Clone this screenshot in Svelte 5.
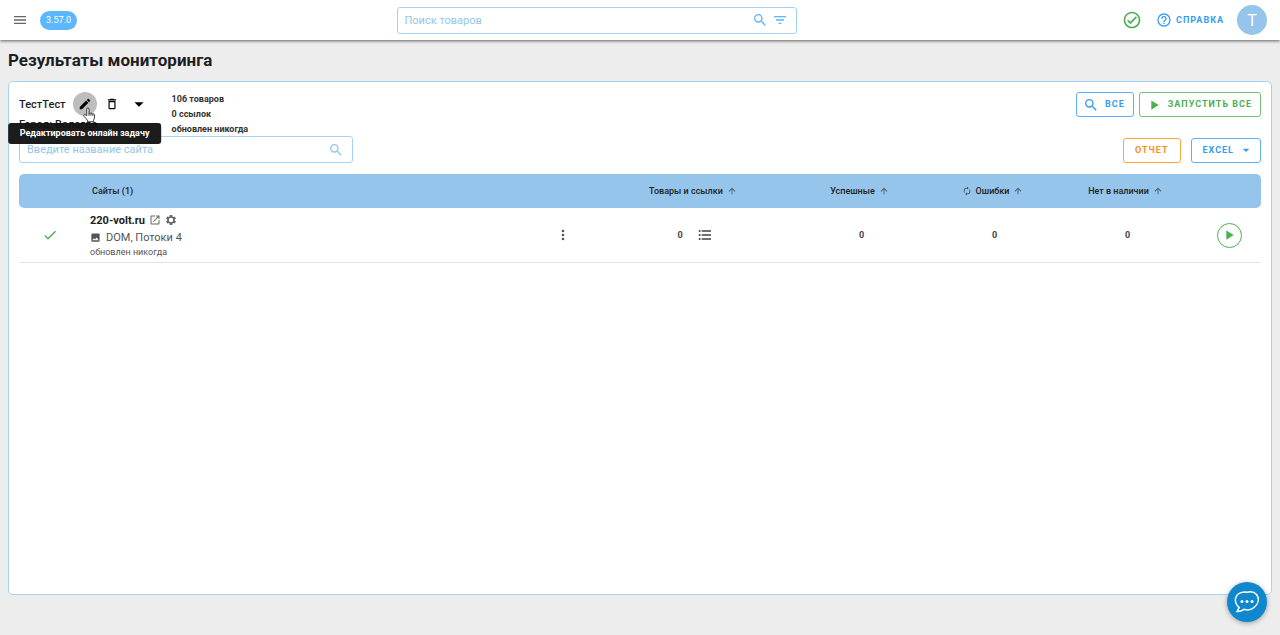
<script>
  const icons = {
    menu: 'M3,6H21V8H3V6M3,11H21V13H3V11M3,16H21V18H3V16Z',
    magnify: 'M9.5,3A6.5,6.5 0 0,1 16,9.5C16,11.11 15.41,12.59 14.44,13.73L14.71,14H15.5L20.5,19L19,20.5L14,15.5V14.71L13.73,14.44C12.59,15.41 11.11,16 9.5,16A6.5,6.5 0 0,1 3,9.5A6.5,6.5 0 0,1 9.5,3M9.5,5C7,5 5,7 5,9.5C5,12 7,14 9.5,14C12,14 14,12 14,9.5C14,7 12,5 9.5,5Z',
    filter: 'M6,13H18V11H6M3,6V8H21V6M10,18H14V16H10V18Z',
    checkCircle: 'M12 2C6.5 2 2 6.5 2 12S6.5 22 12 22 22 17.5 22 12 17.5 2 12 2M12 20C7.59 20 4 16.41 4 12S7.59 4 12 4 20 7.59 20 12 16.41 20 12 20M16.59 7.58L10 14.17L7.41 11.59L6 13L10 17L18 9L16.59 7.58Z',
    help: 'M11,18H13V16H11V18M12,2A10,10 0 0,0 2,12A10,10 0 0,0 12,22A10,10 0 0,0 22,12A10,10 0 0,0 12,2M12,20C7.59,20 4,16.41 4,12C4,7.59 7.59,4 12,4C16.41,4 20,7.59 20,12C20,16.41 16.41,20 12,20M12,6A4,4 0 0,0 8,10H10A2,2 0 0,1 12,8A2,2 0 0,1 14,10C14,12 11,11.75 11,15H13C13,12.75 16,12.5 16,10A4,4 0 0,0 12,6Z',
    pencil: 'M20.71,7.04C21.1,6.65 21.1,6 20.71,5.63L18.37,3.29C18,2.9 17.35,2.9 16.96,3.29L15.12,5.12L18.87,8.87M3,17.25V21H6.75L17.81,9.93L14.06,6.18L3,17.25Z',
    trash: 'M6,19A2,2 0 0,0 8,21H16A2,2 0 0,0 18,19V7H6V19M8,9H16V19H8V9M15.5,4L14.5,3H9.5L8.5,4H5V6H19V4H15.5Z',
    down: 'M7,10L12,15L17,10H7Z',
    play: 'M8,5.14V19.14L19,12.14L8,5.14Z',
    check: 'M21,7L9,19L3.5,13.5L4.91,12.09L9,16.17L19.59,5.59L21,7Z',
    open: 'M14,3V5H17.59L7.76,14.83L9.17,16.24L19,6.41V10H21V3M19,19H5V5H12V3H5C3.89,3 3,3.9 3,5V19A2,2 0 0,0 5,21H19A2,2 0 0,0 21,19V12H19V19Z',
    cog: 'M19.43,12.98C19.47,12.66 19.5,12.34 19.5,12C19.5,11.66 19.47,11.34 19.43,11.02L21.54,9.37C21.73,9.22 21.78,8.95 21.66,8.73L19.66,5.27C19.54,5.05 19.27,4.97 19.05,5.05L16.56,6.05C16.04,5.65 15.48,5.32 14.87,5.07L14.49,2.42C14.46,2.18 14.25,2 14,2H10C9.75,2 9.54,2.18 9.51,2.42L9.13,5.07C8.52,5.32 7.96,5.66 7.44,6.05L4.95,5.05C4.72,4.96 4.46,5.05 4.34,5.27L2.34,8.73C2.21,8.95 2.27,9.22 2.46,9.37L4.57,11.02C4.53,11.34 4.5,11.67 4.5,12C4.5,12.33 4.53,12.66 4.57,12.98L2.46,14.63C2.27,14.78 2.22,15.05 2.34,15.27L4.34,18.73C4.46,18.95 4.73,19.03 4.95,18.95L7.44,17.95C7.96,18.35 8.52,18.68 9.13,18.93L9.51,21.58C9.54,21.82 9.75,22 10,22H14C14.25,22 14.46,21.82 14.49,21.58L14.87,18.93C15.48,18.68 16.04,18.34 16.56,17.95L19.05,18.95C19.28,19.04 19.54,18.95 19.66,18.73L21.66,15.27C21.78,15.05 21.73,14.78 21.54,14.63L19.43,12.98M12,16.5A4.5,4.5 0 0,1 7.5,12A4.5,4.5 0 0,1 12,7.5A4.5,4.5 0 0,1 16.5,12A4.5,4.5 0 0,1 12,16.5Z',
    image: 'M8.5,13.5L11,16.5L14.5,12L19,18H5M21,19V5C21,3.89 20.1,3 19,3H5A2,2 0 0,0 3,5V19A2,2 0 0,0 5,21H19A2,2 0 0,0 21,19Z',
    dots: 'M12,16A2,2 0 0,1 14,18A2,2 0 0,1 12,20A2,2 0 0,1 10,18A2,2 0 0,1 12,16M12,10A2,2 0 0,1 14,12A2,2 0 0,1 12,14A2,2 0 0,1 10,12A2,2 0 0,1 12,10M12,4A2,2 0 0,1 14,6A2,2 0 0,1 12,8A2,2 0 0,1 10,6A2,2 0 0,1 12,4Z',
    list: 'M7,5H21V7H7V5M7,13V11H21V13H7M4,4.5A1.5,1.5 0 0,1 5.5,6A1.5,1.5 0 0,1 4,7.5A1.5,1.5 0 0,1 2.5,6A1.5,1.5 0 0,1 4,4.5M4,10.5A1.5,1.5 0 0,1 5.5,12A1.5,1.5 0 0,1 4,13.5A1.5,1.5 0 0,1 2.5,12A1.5,1.5 0 0,1 4,10.5M7,19V17H21V19H7M4,16.5A1.5,1.5 0 0,1 5.5,18A1.5,1.5 0 0,1 4,19.5A1.5,1.5 0 0,1 2.5,18A1.5,1.5 0 0,1 4,16.5Z',
    up: 'M13,20H11V8L5.5,13.5L4.08,12.08L12,4.16L19.92,12.08L18.5,13.5L13,8V20Z',
    sync: 'M12,6V9L16,5L12,1V4A8,8 0 0,0 4,12C4,13.57 4.46,15.03 5.24,16.26L6.7,14.8C6.25,13.97 6,13 6,12A6,6 0 0,1 12,6M18.76,7.74L17.3,9.2C17.74,10.04 18,11 18,12A6,6 0 0,1 12,18V15L8,19L12,23V20A8,8 0 0,0 20,12C20,10.43 19.54,8.97 18.76,7.74Z'
  };

  const columns = [
    { title: 'Товары и ссылки', key: 'links', list: true },
    { title: 'Успешные', key: 'success' },
    { title: 'Ошибки', key: 'errors', sync: true },
    { title: 'Нет в наличии', key: 'missing' }
  ];

  const sites = [
    {
      name: '220-volt.ru',
      mode: 'DOM, Потоки 4',
      updated: 'обновлен никогда',
      links: 0,
      success: 0,
      errors: 0,
      missing: 0
    }
  ];

  let productQuery = $state('');
  let siteQuery = $state('');
</script>

{#snippet icon(name, size = 16)}
  <svg class="icon" viewBox="0 0 24 24" width={size} height={size} aria-hidden="true">
    <path d={icons[name]} />
  </svg>
{/snippet}

<div class="app">
  <header class="topbar">
    <div class="group brand">
      <button class="plain" aria-label="Меню">{@render icon('menu')}</button>
      <span class="chip">3.57.0</span>
    </div>

    <div class="field product-search">
      <input type="text" placeholder="Поиск товаров" aria-label="Поиск товаров" bind:value={productQuery} />
      <button class="plain" aria-label="Найти">{@render icon('magnify')}</button>
      <button class="plain" aria-label="Фильтр">{@render icon('filter')}</button>
    </div>

    <div class="group account">
      <span class="status">{@render icon('checkCircle', 20)}</span>
      <a class="help" href="#help">{@render icon('help')}Справка</a>
      <button class="avatar">Т</button>
    </div>
  </header>

  <main>
    <h1>Результаты мониторинга</h1>

    <section class="card">
      <div class="task">
        <div class="task-main">
          <div class="task-title">
            <span class="task-name">ТестТест</span>
            <div class="edit">
              <button class="round active" aria-label="Редактировать" aria-describedby="edit-tip">{@render icon('pencil', 14)}</button>
              <div class="tooltip" id="edit-tip" role="tooltip">Редактировать онлайн задачу</div>
              <svg class="pointer" viewBox="0 0 16 20" width="12" height="16" aria-hidden="true">
                <path d="M5 11V2.2a1.5 1.5 0 0 1 3 0V8a1.4 1.4 0 0 1 2.6.3 1.4 1.4 0 0 1 2.4.5 1.3 1.3 0 0 1 2.2 1V14c0 1-1 2-1 3v2H6v-2L1.3 11.7a1.4 1.4 0 0 1 2-1.9Z" />
                <path d="M8 8v3M10.6 8.5V11M13 9v2" />
              </svg>
            </div>
            <button class="round" aria-label="Удалить">{@render icon('trash', 14)}</button>
            <button class="round" aria-label="Ещё">{@render icon('down', 22)}</button>
          </div>
          <div class="city">Город: Вологда</div>
        </div>

        <div class="task-info">
          <div>106 товаров</div>
          <div>0 ссылок</div>
          <div>обновлен никогда</div>
        </div>

        <div class="actions">
          <button class="btn blue">{@render icon('magnify')}Все</button>
          <button class="btn green">{@render icon('play')}Запустить все</button>
        </div>
      </div>

      <div class="filters">
        <div class="field site-search">
          <input type="text" placeholder="Введите название сайта" aria-label="Введите название сайта" bind:value={siteQuery} />
          <button class="plain" aria-label="Найти сайт">{@render icon('magnify')}</button>
        </div>
        <div class="actions wide">
          <button class="btn orange">Отчет</button>
          <button class="btn blue excel">Excel{@render icon('down')}</button>
        </div>
      </div>

      <table>
        <thead>
          <tr>
            <th class="col-status"></th>
            <th class="col-site">Сайты ({sites.length})</th>
            <th class="col-menu"></th>
            {#each columns as column}
              <th class:col-links={column.list} class:col-count={!column.list}>
                <span class="sort">
                  {#if column.sync}{@render icon('sync', 10)}{/if}
                  {column.title}
                  {@render icon('up', 10)}
                </span>
              </th>
            {/each}
            <th class="col-run"></th>
          </tr>
        </thead>
        <tbody>
          {#each sites as site}
            <tr>
              <td class="done">{@render icon('check')}</td>
              <td class="site">
                <div class="site-name">
                  {site.name}
                  <a href="#open" aria-label="Открыть сайт">{@render icon('open', 12)}</a>
                  <button class="plain" aria-label="Настройки">{@render icon('cog', 12)}</button>
                </div>
                <div class="site-mode">{@render icon('image', 11)}{site.mode}</div>
                <div class="site-updated">{site.updated}</div>
              </td>
              <td><button class="plain menu" aria-label="Действия">{@render icon('dots')}</button></td>
              {#each columns as column}
                <td>
                  <span class="count">
                    {site[column.key]}
                    {#if column.list}
                      <button class="plain" aria-label="Список">{@render icon('list')}</button>
                    {/if}
                  </span>
                </td>
              {/each}
              <td class="launch"><button class="run" aria-label="Запустить">{@render icon('play')}</button></td>
            </tr>
          {/each}
        </tbody>
      </table>
    </section>
  </main>

  <button class="chat" aria-label="Чат">
    <svg viewBox="0 0 26 24" width="26" height="24" aria-hidden="true">
      <path d="M3 21.5 5.2 17.6C-1 12 1 4.500 7 2.600 9.500 1.900 12 2 13 2.300 16 1.500 20 1.600 22.500 4.500 26 9 24 14 20 17.500 17 20 13 20.500 10 19.300 8 20.800 5.500 21.700 3 21.500Z" />
      <circle cx="8" cy="11.500" r="1.500" />
      <circle cx="13" cy="11.500" r="1.500" />
      <circle cx="18" cy="11.500" r="1.500" />
    </svg>
  </button>
</div>

<style>
  :global(body) {
    background: #ededed;
  }

  .app {
    display: flex;
    flex-direction: column;
    min-height: 100vh;
    font-family: Roboto, 'Liberation Sans', sans-serif;
    font-size: 11px;
    line-height: 15px;
    color: #1e1e1e;
  }

  * {
    box-sizing: border-box;
  }

  button,
  input {
    font: inherit;
    color: inherit;
  }

  button {
    cursor: pointer;
  }

  .icon {
    display: block;
    flex: none;
    fill: currentColor;
  }

  .plain {
    display: block;
    padding: 0;
    border: none;
    background: none;
  }

  .topbar {
    display: flex;
    align-items: center;
    justify-content: space-between;
    height: 40px;
    padding: 0 13px 0 12px;
    background: #fff;
    box-shadow: 0 1px 3px rgba(0, 0, 0, 0.6);
  }

  .group {
    display: flex;
    align-items: center;
  }

  .brand {
    gap: 12px;
    color: #666;
  }

  .account {
    padding-left: 6px;
  }

  .chip {
    padding: 2px 6px;
    border-radius: 10px;
    background: #5db7ff;
    color: #fff;
    font-size: 9px;
  }

  .field {
    display: flex;
    align-items: center;
    gap: 4px;
    height: 27px;
    padding: 0 8px 0 7px;
    border: 1px solid #a6d3f5;
    border-radius: 3px;
    background: #fff;
    color: #94c5ea;
  }

  .field input {
    flex: 1;
    min-width: 0;
    padding: 0;
    border: none;
    outline: none;
    background: none;
    color: #333;
  }

  .field input::placeholder {
    color: #94c5ea;
    opacity: 1;
  }

  .product-search {
    width: 400px;
    color: #5db7ff;
  }

  .site-search {
    width: 334px;
  }

  .status {
    margin-right: 14px;
    color: #4caf50;
  }

  .help {
    display: flex;
    align-items: center;
    gap: 4px;
    margin-right: 13px;
    color: #339cf5;
    font-size: 9px;
    font-weight: 700;
    letter-spacing: 1px;
    text-transform: uppercase;
    text-decoration: none;
  }

  .avatar {
    width: 30px;
    height: 30px;
    padding: 0;
    border: none;
    border-radius: 50%;
    background: #95c5ea;
    color: #fff;
    font-size: 16px;
  }

  main {
    display: flex;
    flex: 1;
    flex-direction: column;
    padding: 0 8px 40px;
  }

  h1 {
    margin: 0;
    padding: 8px 0 9px;
    font-size: 17px;
    font-weight: 700;
    line-height: 24px;
  }

  .card {
    flex: 1;
    padding: 9px 10px;
    border: 1px solid #a6d3f5;
    border-radius: 5px;
    background: #fff;
  }

  .task {
    display: flex;
    align-items: flex-start;
    height: 45px;
    font-weight: 500;
  }

  .task-main {
    margin-right: 21px;
  }

  .task-title {
    display: flex;
    align-items: center;
    gap: 3px;
    height: 26px;
  }

  .task-name {
    margin-right: 4px;
  }

  .edit {
    position: relative;
  }

  .round {
    display: flex;
    align-items: center;
    justify-content: center;
    width: 24px;
    height: 24px;
    padding: 0;
    border: none;
    border-radius: 50%;
    background: none;
    color: #000;
  }

  .round.active {
    background: #bdbdbd;
  }

  .tooltip {
    position: absolute;
    top: 31px;
    left: 50%;
    z-index: 1;
    padding: 3px 12px;
    border-radius: 3px;
    background: rgba(16, 16, 16, 0.95);
    color: #fff;
    font-size: 9px;
    font-weight: 700;
    white-space: nowrap;
    transform: translateX(-50%);
  }

  .pointer {
    position: absolute;
    top: 15px;
    left: 10px;
    z-index: 2;
    fill: #fff;
    stroke: #222;
    stroke-width: 1.2;
  }

  .task-info {
    flex: 1;
    padding-top: 1px;
    font-size: 9px;
    font-weight: 700;
    color: #333;
  }

  .actions {
    display: flex;
    gap: 5px;
    padding-top: 1px;
  }

  .actions.wide {
    gap: 10px;
  }

  .btn {
    display: flex;
    align-items: center;
    gap: 6px;
    height: 25px;
    padding: 0 8px 0 6px;
    border: 1px solid;
    border-radius: 3px;
    background: #fff;
    font-size: 9px;
    font-weight: 700;
    letter-spacing: 1px;
    text-transform: uppercase;
  }

  .btn.blue {
    border-color: #5cb0fa;
    color: #339cf5;
  }

  .btn.green {
    border-color: #74c077;
    color: #4caf50;
  }

  .btn.orange {
    padding: 0 11px;
    border-color: #fca63f;
    color: #fb8c1e;
  }

  .btn.excel {
    gap: 4px;
    padding: 0 6px 0 11px;
  }

  .filters {
    display: flex;
    align-items: center;
    justify-content: space-between;
    margin-bottom: 11px;
  }

  table {
    width: 100%;
    border-spacing: 0;
    table-layout: fixed;
    color: #555;
  }

  th {
    height: 34px;
    padding: 0;
    background: #95c5ea;
    color: #222;
    font-size: 9px;
    font-weight: 500;
  }

  th:first-child {
    border-radius: 5px 0 0 5px;
  }

  th:last-child {
    border-radius: 0 5px 5px 0;
  }

  .sort {
    display: flex;
    align-items: center;
    justify-content: center;
    gap: 4px;
    padding-right: 4px;
  }

  .sort .icon {
    opacity: 0.7;
  }

  .col-status {
    width: 62px;
  }

  .col-site {
    padding-left: 11px;
    text-align: left;
  }

  .col-menu {
    width: 64px;
  }

  .col-links {
    width: 200px;
  }

  .col-count {
    width: 133px;
  }

  .col-run {
    width: 67px;
  }

  td {
    height: 55px;
    padding: 0;
    border-bottom: 1px solid #e4e4e4;
    text-align: center;
  }

  .menu,
  .run,
  .done .icon {
    margin: 0 auto;
  }

  .done {
    color: #4caf50;
  }

  td.site {
    padding-left: 9px;
    text-align: left;
  }

  td.launch {
    padding-left: 3px;
  }

  .site-name,
  .site-mode {
    display: flex;
    align-items: center;
    gap: 4px;
    line-height: 17px;
  }

  .site-name {
    color: #222;
    font-weight: 700;
  }

  .site-name a,
  .site-name button {
    color: #666;
  }

  .site-mode {
    gap: 5px;
  }

  .site-updated {
    font-size: 9px;
    line-height: 13px;
  }

  .count {
    display: flex;
    align-items: center;
    justify-content: center;
    gap: 14px;
    font-size: 9px;
    font-weight: 700;
    color: #444;
  }

  .run {
    display: flex;
    align-items: center;
    justify-content: center;
    width: 25px;
    height: 25px;
    padding: 0;
    border: 1px solid;
    border-radius: 50%;
    background: none;
    color: #4caf50;
  }

  .chat {
    position: fixed;
    right: 13px;
    bottom: 13px;
    display: flex;
    align-items: center;
    justify-content: center;
    width: 40px;
    height: 40px;
    padding: 0;
    border: none;
    border-radius: 50%;
    background: #0f87cc;
    box-shadow: 0 1px 5px rgba(0, 0, 0, 0.35);
  }

  .chat path {
    fill: none;
    stroke: #fff;
    stroke-width: 1.5;
  }

  .chat circle {
    fill: #fff;
  }
</style>
